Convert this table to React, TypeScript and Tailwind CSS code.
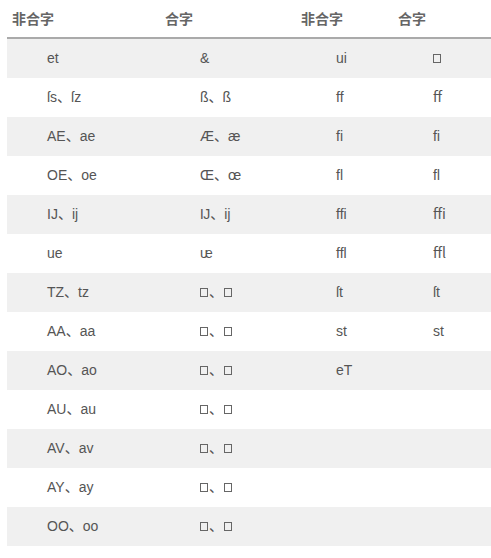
import React from "react";

const Tofu = () => (
  <span className="inline-block w-[8px] h-[9px] border border-[#666] align-[0px]" />
);

type Cell = React.ReactNode;

const T2 = () => (
  <span>
    <Tofu />
    <span className="mx-[1px]">、</span>
    <Tofu />
  </span>
);

const rows: Cell[][] = [
  ["et", "&", "ui", <Tofu />],
  ["ſs、ſz", "ß、ß", "ff", "ﬀ"],
  ["AE、ae", "Æ、æ", "fi", "ﬁ"],
  ["OE、oe", "Œ、œ", "fl", "ﬂ"],
  ["IJ、ij", "Ĳ、ĳ", "ffi", "ﬃ"],
  ["ue", "ᵫ", "ffl", "ﬄ"],
  ["TZ、tz", <T2 />, "ſt", "ſt"],
  ["AA、aa", <T2 />, "st", "st"],
  ["AO、ao", <T2 />, "eT", ""],
  ["AU、au", <T2 />, "", ""],
  ["AV、av", <T2 />, "", ""],
  ["AY、ay", <T2 />, "", ""],
  ["OO、oo", <T2 />, "", ""],
];

const cols = "grid grid-cols-[153px_136px_97px_1fr]";

export default function App() {
  return (
    <div
      className="w-[491px] h-[558px] bg-white text-[#555]"
      style={{ fontFamily: '"Liberation Sans", Arial, "Noto Sans CJK SC", sans-serif' }}
    >
      <div className="pl-[7px]">
        <div
          className={`${cols} h-[39px] items-center border-b-2 border-[#aaa] text-[#666] font-bold text-[14px]`}
          style={{ fontFamily: '"Noto Sans CJK SC", sans-serif' }}
        >
          <div className="pl-[5px]">非合字</div>
          <div className="pl-[5px]">合字</div>
          <div className="pl-[5px]">非合字</div>
          <div className="pl-[5px]">合字</div>
        </div>
        {rows.map((r, i) => (
          <div
            key={i}
            className={`${cols} h-[39px] items-center text-[14px] ${i % 2 === 0 ? "bg-[#f0f0f0]" : "bg-white"}`}
          >
            {r.map((c, j) => (
              <div key={j} className="pl-[40px] whitespace-nowrap">
                {c}
              </div>
            ))}
          </div>
        ))}
      </div>
    </div>
  );
}
